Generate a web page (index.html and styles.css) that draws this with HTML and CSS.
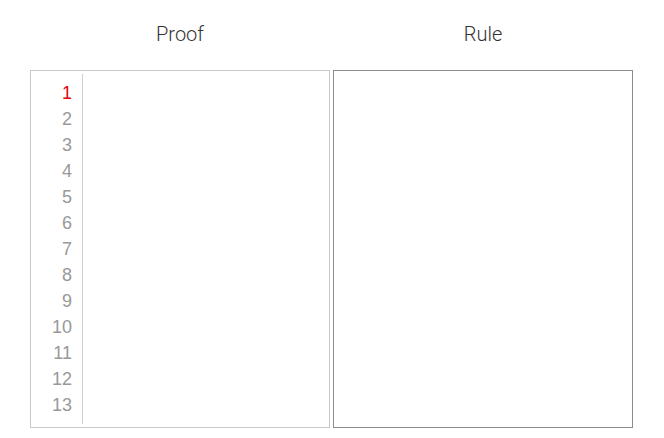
FILE: index.html
```html
<!DOCTYPE html>
<html>
<head>
<meta charset="utf-8">
<link rel="stylesheet" href="styles.css">
</head>
<body>
<div class="page">
  <div class="col">
    <div class="title">Proof</div>
    <div class="box proof">
      <div class="gutter">
        <div class="ln active">1</div>
        <div class="ln">2</div>
        <div class="ln">3</div>
        <div class="ln">4</div>
        <div class="ln">5</div>
        <div class="ln">6</div>
        <div class="ln">7</div>
        <div class="ln">8</div>
        <div class="ln">9</div>
        <div class="ln">10</div>
        <div class="ln">11</div>
        <div class="ln">12</div>
        <div class="ln">13</div>
      </div>
      <div class="editor"></div>
    </div>
  </div>
  <div class="col">
    <div class="title">Rule</div>
    <div class="box rule"></div>
  </div>
</div>
</body>
</html>
```
FILE: styles.css
```css
html, body {
  margin: 0;
  padding: 0;
  background: #ffffff;
}
.page {
  display: flex;
  gap: 3px;
  padding-left: 30px;
  padding-top: 21px;
}
.col {
  width: 300px;
  display: flex;
  flex-direction: column;
}
.title {
  font-family: Roboto, "Liberation Sans", sans-serif;
  font-weight: 300;
  font-size: 20px;
  color: #333;
  text-align: center;
  height: 49px;
  line-height: 26px;
}
.box {
  box-sizing: border-box;
  height: 358px;
  background: #fff;
}
.proof {
  border: 1px solid #c8c8c8;
  display: flex;
  padding: 3px 0;
}
.rule {
  border: 1px solid #8c8c8c;
}
.gutter {
  width: 52px;
  border-right: 1px solid #cfcfcf;
  padding-top: 6px;
  box-sizing: border-box;
}
.ln {
  font-family: "Liberation Sans", Arial, sans-serif;
  font-size: 18px;
  line-height: 26px;
  height: 26px;
  color: #999999;
  text-align: right;
  padding-right: 10px;
}
.ln.active {
  color: #e8000b;
}
.editor {
  flex: 1;
}
```
